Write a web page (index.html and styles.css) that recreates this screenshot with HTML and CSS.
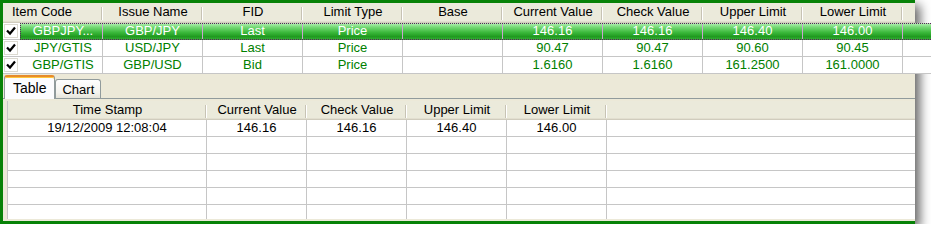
FILE: index.html
```html
<!DOCTYPE html>
<html lang="en">
<head>
    <meta charset="UTF-8">
    <title>Limit Monitor</title>
    <link rel="stylesheet" href="styles.css">
</head>
<body>
    <div class="window">
        <!-- watch list -->
        <div class="list">
            <div class="head">
                <div class="hcell first-head">Item Code</div>
                <div class="hcell">Issue Name</div>
                <div class="hcell">FID</div>
                <div class="hcell">Limit Type</div>
                <div class="hcell">Base</div>
                <div class="hcell">Current Value</div>
                <div class="hcell">Check Value</div>
                <div class="hcell">Upper Limit</div>
                <div class="hcell">Lower Limit</div>
                <div class="hcell fill"></div>
            </div>
            <div class="row sel">
                <div class="chk"><span class="box"><svg width="10" height="10" viewBox="0 0 10 10"><path d="M1 4.5 L4 7.5 L9 1.5" fill="none" stroke="#000" stroke-width="2.2"/></svg></span></div>
                <div class="cells">
                    <div class="cell code">GBPJPY...</div>
                    <div class="cell">GBP/JPY</div>
                    <div class="cell">Last</div>
                    <div class="cell">Price</div>
                    <div class="cell"></div>
                    <div class="cell">146.16</div>
                    <div class="cell">146.16</div>
                    <div class="cell">146.40</div>
                    <div class="cell">146.00</div>
                    <div class="cell fill"></div>
                </div>
            </div>
            <div class="row">
                <div class="chk"><span class="box"><svg width="10" height="10" viewBox="0 0 10 10"><path d="M1 4.5 L4 7.5 L9 1.5" fill="none" stroke="#000" stroke-width="2.2"/></svg></span></div>
                <div class="cells">
                    <div class="cell code">JPY/GTIS</div>
                    <div class="cell">USD/JPY</div>
                    <div class="cell">Last</div>
                    <div class="cell">Price</div>
                    <div class="cell"></div>
                    <div class="cell">90.47</div>
                    <div class="cell">90.47</div>
                    <div class="cell">90.60</div>
                    <div class="cell">90.45</div>
                    <div class="cell fill"></div>
                </div>
            </div>
            <div class="row">
                <div class="chk"><span class="box"><svg width="10" height="10" viewBox="0 0 10 10"><path d="M1 4.5 L4 7.5 L9 1.5" fill="none" stroke="#000" stroke-width="2.2"/></svg></span></div>
                <div class="cells">
                    <div class="cell code">GBP/GTIS</div>
                    <div class="cell">GBP/USD</div>
                    <div class="cell">Bid</div>
                    <div class="cell">Price</div>
                    <div class="cell"></div>
                    <div class="cell">1.6160</div>
                    <div class="cell">1.6160</div>
                    <div class="cell">161.2500</div>
                    <div class="cell">161.0000</div>
                    <div class="cell fill"></div>
                </div>
            </div>
        </div>

        <!-- tabs -->
        <div class="tabs">
            <div class="tab active">Table</div>
            <div class="tab">Chart</div>
        </div>

        <div class="panel">
            <div class="sheet">
                <div class="head small">
                    <div class="hcell stamp">Time Stamp</div>
                    <div class="hcell">Current Value</div>
                    <div class="hcell">Check Value</div>
                    <div class="hcell">Upper Limit</div>
                    <div class="hcell">Lower Limit</div>
                    <div class="hcell fill"></div>
                </div>
                <div class="srow">
                    <div class="scell stamp">19/12/2009 12:08:04</div>
                    <div class="scell">146.16</div>
                    <div class="scell">146.16</div>
                    <div class="scell">146.40</div>
                    <div class="scell">146.00</div>
                    <div class="scell fill"></div>
                </div>
                <div class="srow">
                    <div class="scell stamp"></div><div class="scell"></div><div class="scell"></div><div class="scell"></div><div class="scell"></div><div class="scell fill"></div>
                </div>
                <div class="srow">
                    <div class="scell stamp"></div><div class="scell"></div><div class="scell"></div><div class="scell"></div><div class="scell"></div><div class="scell fill"></div>
                </div>
                <div class="srow">
                    <div class="scell stamp"></div><div class="scell"></div><div class="scell"></div><div class="scell"></div><div class="scell"></div><div class="scell fill"></div>
                </div>
                <div class="srow">
                    <div class="scell stamp"></div><div class="scell"></div><div class="scell"></div><div class="scell"></div><div class="scell"></div><div class="scell fill"></div>
                </div>
                <div class="srow">
                    <div class="scell stamp"></div><div class="scell"></div><div class="scell"></div><div class="scell"></div><div class="scell"></div><div class="scell fill"></div>
                </div>
            </div>
        </div>
    </div>
</body>
</html>
```

FILE: styles.css
```css
body {
    margin: 0;
    background: #fff;
    font-family: "Liberation Sans", Arial, sans-serif;
    font-size: 13px;
    color: #000;
    overflow: hidden;
}
.window {
    width: 912px;
    height: 218px;
    border: 3px solid #078207;
    border-right: 0;
    background: #ece9d8;
    box-shadow: 5px 5px 10px rgba(0, 0, 0, 0.6);
    display: flex;
    flex-direction: column;
}
.list {
    height: 71px;
}
.head {
    display: flex;
    height: 20px;
}
.hcell {
    width: 100px;
    flex: none;
    box-sizing: border-box;
    text-align: center;
    line-height: 18px;
    white-space: nowrap;
    background:
        linear-gradient(#c7c3b4, #c7c3b4) right 1px top 4px / 1px 13px no-repeat,
        linear-gradient(#fff, #fff) right 0 top 4px / 1px 13px no-repeat,
        #ebeadb;
    box-shadow: inset 0 -1px #d0ccbd, inset 0 -2px #e2dfd0;
}
.hcell.first-head {
    text-align: left;
    padding-left: 9px;
}
.hcell.fill {
    flex: 1;
    background: #ebeadb;
}
.row {
    display: flex;
    height: 17px;
}
.chk {
    width: 17px;
    flex: none;
    box-sizing: border-box;
    background: #fff;
    border-bottom: 1px solid #c6c6c6;
    display: flex;
    align-items: center;
}
.box {
    width: 14px;
    height: 14px;
    margin-left: 1px;
    box-sizing: border-box;
    border: 1px solid #dcdad0;
    background: #fff;
    display: flex;
    align-items: center;
    justify-content: center;
}
.cells {
    flex: 1;
    display: flex;
    background: #fff;
}
.cell {
    width: 100px;
    flex: none;
    box-sizing: border-box;
    border-right: 1px solid #c6c6c6;
    border-bottom: 1px solid #c6c6c6;
    text-align: center;
    line-height: 16px;
    color: #008000;
    white-space: nowrap;
}
.cell.code {
    width: 83px;
    padding-left: 4px;
}
.cell.fill {
    flex: 1;
    border-right: 0;
}
.row.sel .cells {
    background: linear-gradient(#b9f2b9 0%, #74d874 25%, #3cb93c 55%, #1f9a1f 80%, #3aaf3a 100%);
    outline: 1px dotted #5a1f5a;
    outline-offset: -1px;
}
.row.sel .cell {
    color: #fff;
    border-right-color: #c9a6cf;
    border-bottom-color: transparent;
}
.tabs {
    height: 24px;
    display: flex;
    align-items: flex-end;
    padding-left: 1px;
}
.tab {
    height: 19px;
    box-sizing: border-box;
    padding: 0 6px;
    line-height: 19px;
    border: 1px solid #919b9c;
    border-bottom: 0;
    border-radius: 3px 3px 0 0;
    background: linear-gradient(#fefefe, #f4f3ee 70%, #e6e4da);
}
.tab.active {
    height: 24px;
    margin-bottom: -1px;
    padding: 0 8px;
    line-height: 22px;
    font-size: 14px;
    border-top: 2px solid #e68b2c;
    box-shadow: inset 0 1px #ffc73c;
    background: #fcfcfe;
    position: relative;
    z-index: 1;
}
.panel {
    flex: 1;
    border-top: 1px solid #919b9c;
    padding: 2px 0 0 4px;
}
.sheet {
    height: 118px;
    overflow: hidden;
    background: #fff;
    border-left: 1px solid #c6c6c6;
}
.head.small {
    height: 19px;
}
.head.small .hcell {
    line-height: 18px;
}
.hcell.stamp,
.scell.stamp {
    width: 199px;
}
.srow {
    display: flex;
    height: 17px;
}
.scell {
    width: 100px;
    flex: none;
    box-sizing: border-box;
    border-right: 1px solid #c6c6c6;
    border-bottom: 1px solid #c6c6c6;
    text-align: center;
    line-height: 16px;
}
.scell.fill {
    flex: 1;
    border-right: 0;
}
```
